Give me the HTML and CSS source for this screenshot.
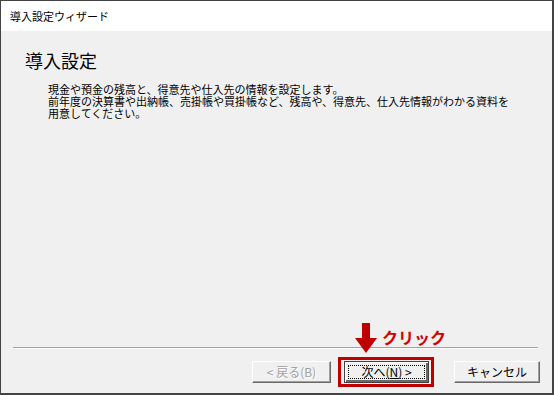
FILE: index.html
```html
<!DOCTYPE html>
<html lang="ja">
  <head>
    <meta charset="UTF-8">
    <meta name="viewport" content="width=device-width, initial-scale=1.0">
    <title>導入設定ウィザード</title>
    <link rel="stylesheet" href="styles.css">
  </head>
  <body>
    <div class="wizard">
      <div class="titlebar">導入設定ウィザード</div>
      <div class="content">
        <h1 class="heading">導入設定</h1>
        <p class="desc">現金や預金の残高と、得意先や仕入先の情報を設定します。<br>前年度の決算書や出納帳、売掛帳や買掛帳など、残高や、得意先、仕入先情報がわかる資料を<br>用意してください。</p>
      </div>
      <div class="footer">
        <div class="separator"></div>
        <div class="buttons">
          <button class="btn btn-back" disabled>&lt; 戻る(B)</button>
          <div class="highlight">
            <div class="callout">
              <svg class="arrow" width="22" height="30" viewBox="0 0 22 30">
                <rect x="7" y="0" width="8" height="16" fill="#c00000"/>
                <polygon points="0,15 22,15 11,30" fill="#c00000"/>
              </svg>
              <span class="callout-text">クリック</span>
            </div>
            <button class="btn btn-next"><span class="focus">次へ(<u>N</u>) &gt;</span></button>
          </div>
          <button class="btn btn-cancel">キャンセル</button>
        </div>
      </div>
    </div>
  </body>
</html>
```

FILE: styles.css
```css
body {
    margin: 0;
    font-family: "Noto Sans CJK JP", "Noto Sans", sans-serif;
    color: #000;
}

.wizard {
    width: 554px;
    height: 395px;
    box-sizing: border-box;
    border: 1px solid #444;
    border-right-width: 2px;
    border-bottom-width: 2px;
    background-color: #f0f0f0;
    display: flex;
    flex-direction: column;
}

.titlebar {
    height: 30px;
    background-color: #fff;
    font-size: 11px;
    line-height: 30px;
    padding-left: 9px;
}

.content {
    flex: 1;
    padding-left: 24px;
}

.heading {
    margin: 17px 0 0;
    font-size: 18px;
    font-weight: normal;
    line-height: 24px;
}

.desc {
    margin: 11px 0 0 23px;
    font-size: 11px;
    line-height: 12px;
    white-space: nowrap;
}

.footer {
    padding-bottom: 6px;
}

.separator {
    margin: 0 14px 0 12px;
    height: 1px;
    background-color: #a0a0a0;
    border-bottom: 1px solid #fff;
}

.buttons {
    display: flex;
    justify-content: flex-end;
    align-items: center;
    margin-top: 8px;
    padding-right: 12px;
}

.btn {
    height: 22px;
    box-sizing: border-box;
    font-family: inherit;
    font-size: 12px;
    line-height: 18px;
    padding: 0;
    background-color: #f0f0f0;
    border: 1px solid;
    border-color: #fff #696969 #696969 #fff;
    box-shadow: inset -1px -1px 0 #a0a0a0;
    color: #000;
}

.btn-back {
    width: 79px;
    color: #a0a0a0;
    text-shadow: 1px 1px 0 #fff;
}

.highlight {
    position: relative;
    margin-left: 7px;
    border: 3px solid #c00000;
    padding: 1px 2px 1px 3px;
}

.btn-next {
    width: 85px;
    display: block;
    border-color: #404040;
    box-shadow: inset 1px 1px 0 #fff, inset -2px -2px 0 #696969;
    padding: 3px;
}

.focus {
    display: block;
    border: 1px dotted #000;
    line-height: 12px;
    height: 12px;
}

.btn-cancel {
    width: 86px;
    margin-left: 20px;
}

.callout {
    position: absolute;
    left: 14px;
    top: -37px;
    display: flex;
    align-items: flex-start;
    white-space: nowrap;
}

.arrow {
    display: block;
}

.callout-text {
    margin-left: 5px;
    margin-top: 4px;
    font-size: 16px;
    font-weight: bold;
    line-height: 20px;
    color: #d00000;
}
```
